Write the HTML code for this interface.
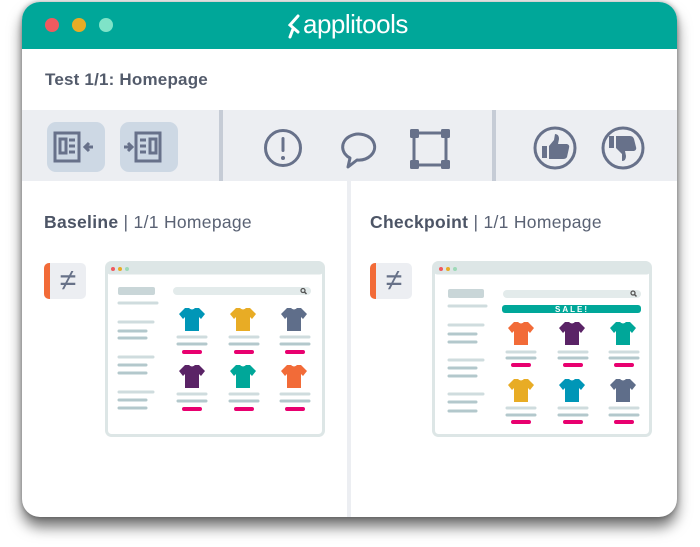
<!DOCTYPE html>
<html><head><meta charset="utf-8"><style>
*{margin:0;padding:0;box-sizing:border-box}
body{width:700px;height:547px;background:#fff;position:relative;overflow:hidden;font-family:"Liberation Sans",sans-serif}
.win{position:absolute;left:22px;top:2px;width:655px;height:515px;border-radius:18px;background:#fff;overflow:hidden;box-shadow:0 10px 14px rgba(0,0,0,.55),0 0 6px rgba(0,0,0,.35)}
.hdr{position:absolute;left:0;top:0;width:655px;height:47px;background:#00A799}
.dot{position:absolute;top:16px;width:14px;height:14px;border-radius:50%}
.title{position:absolute;left:23px;top:68px;font-size:17px;font-weight:bold;color:#535b6b;letter-spacing:0.2px}
.tb{position:absolute;left:0;top:108px;width:655px;height:71px;background:#ECEEF2}
.sep{position:absolute;top:108px;width:4px;height:71px;background:#C6CCD6}
.btn{position:absolute;top:120px;width:58px;height:50px;border-radius:9px;background:#CDD8E4}
.vdiv{position:absolute;left:325px;top:179px;width:4px;height:340px;background:#ECEEF2}
.lbl{position:absolute;top:210px;font-size:17.5px;color:#5a6274;letter-spacing:0.3px}
.lbl b{color:#4d5566}
.ne{position:absolute;top:261px;width:42px;height:36px;background:#ECEEF2;border-radius:5px;overflow:hidden;color:#677188;font-size:30px;line-height:36px;text-align:center;padding-left:6px}
.ne:before{content:"";position:absolute;left:0;top:0;width:6px;height:36px;background:#F26B38}
svg{position:absolute}
</style></head><body>
<div class="win">
 <div class="hdr">
  <div class="dot" style="left:23px;background:#F05A5F"></div>
  <div class="dot" style="left:50px;background:#E8AC25"></div>
  <div class="dot" style="left:77px;background:#7FE3C8"></div>
  <svg style="left:262px;top:11px" width="20" height="26" viewBox="0 0 20 26"><path d="M14 3 L6 12 L14 19 M9 16 L6 24" stroke="#fff" stroke-width="3" fill="none" stroke-linecap="round"/></svg>
  <div style="position:absolute;left:281px;top:7px;font-size:26px;color:#fff;font-weight:normal;letter-spacing:-0.5px">applitools</div>
 </div>
 <div class="title">Test 1/1: Homepage</div>
 <div class="tb"></div>
 <div class="sep" style="left:197px"></div>
 <div class="sep" style="left:470px"></div>
 <div class="btn" style="left:25px"></div>
 <div class="btn" style="left:98px"></div>
 <svg style="left:0;top:108px" width="655" height="71" viewBox="0 0 655 71">
  <g fill="none" stroke="#67718A" stroke-width="3">
   <rect x="33" y="23" width="24" height="28"/><rect x="38" y="29" width="6" height="14"/>
   <path d="M47 30h6M47 36h6M47 42h6M71 37h-8M67 33l-4 4 4 4"/>
   <rect x="114" y="23" width="24" height="28"/><rect x="128" y="29" width="6" height="14"/>
   <path d="M118 30h6M118 36h6M118 42h6M102 37h8M106 33l4 4-4 4"/>
   <circle cx="261" cy="38" r="17.5"/>
   <path d="M328 48 L326 57 L335 50 A16 13 0 1 0 328 48 Z" stroke-linejoin="round"/>
   <rect x="392" y="23" width="32" height="32"/>
   <circle cx="533" cy="38" r="20"/><circle cx="601" cy="38" r="20"/>
  </g>
  <g fill="#67718A">
   <rect x="259.5" y="27" width="3" height="15" rx="1.5"/><circle cx="261" cy="48" r="2"/>
   <rect x="388" y="19" width="9" height="9" rx="1.5"/><rect x="419" y="19" width="9" height="9" rx="1.5"/>
   <rect x="388" y="50" width="9" height="9" rx="1.5"/><rect x="419" y="50" width="9" height="9" rx="1.5"/>
   <rect x="520" y="36" width="5" height="12"/><path d="M527 36 L532 30 L533 24 Q537 24 537 29 L536 34 L545 34 Q548 35 547 38 L545 47 Q544 49 541 49 L527 49Z"/>
   <rect x="587" y="26" width="5" height="12"/><path d="M594 38 L600 44 L600 51 Q604 51 604 46 L603 41 L612 41 Q615 40 614 37 L612 29 Q611 26 608 26 L594 26Z"/>
  </g>
 </svg>
 <div class="vdiv"></div>
 <div class="lbl" style="left:22px"><b>Baseline</b> | 1/1 Homepage</div>
 <div class="lbl" style="left:348px"><b>Checkpoint</b> | 1/1 Homepage</div>
 <div class="ne" style="left:22px">≠</div>
 <div class="ne" style="left:348px">≠</div>
</div>

<svg width="0" height="0" style="position:absolute"><defs>
 <path id="sh" d="M7 0 L11 0 Q14 3 17 0 L21 0 L27 6 L23 11 L21 9 L21 23 L7 23 L7 9 L5 11 L1 6 Z"/>
</defs></svg>

<svg style="left:105px;top:261px" width="220" height="176" viewBox="0 0 220 176">
 <rect x="1.5" y="1.5" width="217" height="173" rx="5" fill="#fff" stroke="#DDE6E6" stroke-width="3"/>
 <rect x="1.5" y="1.5" width="217" height="12" rx="4" fill="#DDE6E6"/>
 <circle cx="8" cy="8" r="2" fill="#F05A5F"/><circle cx="15" cy="8" r="2" fill="#E8AC25"/><circle cx="22" cy="8" r="2" fill="#9ED9B8"/>
 <rect x="13" y="26" width="37" height="8" rx="2" fill="#C9D6D8"/>
 <g stroke-width="3" stroke-linecap="round">
  <path d="M14 42h38M14 61h34M14 96h34M14 131h34" stroke="#CFDCDE"/>
  <path d="M14 70h27M14 77h27M14 104h27M14 112h27M14 139h27M14 147h27" stroke="#B3C8CC"/>
  <path d="M73 76h28M125 76h28M176 76h28M73 133h28M125 133h28M176 133h28" stroke="#CFDCDE"/>
  <path d="M73 83h28M125 83h28M176 83h28M73 140h28M125 140h28M176 140h28" stroke="#B3C8CC"/>
  <path d="M79 91h16M131 91h16M182 91h16M79 148h16M131 148h16M182 148h16" stroke="#E8006F" stroke-width="4"/>
 </g>
 <rect x="68" y="26" width="138" height="8" rx="4" fill="#E3EBEB"/>
 <circle cx="198" cy="29.5" r="2" fill="none" stroke="#555" stroke-width="1.3"/><path d="M199.5 31l2 2" stroke="#555" stroke-width="1.5"/>
 <use href="#sh" x="73" y="47" fill="#0096B7"/><use href="#sh" x="124" y="47" fill="#E8AC25"/><use href="#sh" x="175" y="47" fill="#5F6E8A"/>
 <use href="#sh" x="73" y="104" fill="#5A2366"/><use href="#sh" x="124" y="104" fill="#00A799"/><use href="#sh" x="175" y="104" fill="#F26B38"/>
</svg>

<svg style="left:432px;top:261px" width="220" height="176" viewBox="0 0 220 176">
 <rect x="1.5" y="1.5" width="217" height="173" rx="5" fill="#fff" stroke="#DDE6E6" stroke-width="3"/>
 <rect x="1.5" y="1.5" width="217" height="12" rx="4" fill="#DDE6E6"/>
 <circle cx="9" cy="8" r="2" fill="#F05A5F"/><circle cx="16" cy="8" r="2" fill="#E8AC25"/><circle cx="23" cy="8" r="2" fill="#9ED9B8"/>
 <rect x="16" y="28" width="36" height="9" rx="2" fill="#C9D6D8"/>
 <g stroke-width="3" stroke-linecap="round">
  <path d="M17 45h37M17 64h34M17 99h34M17 133h34" stroke="#CFDCDE"/>
  <path d="M17 73h27M17 81h27M17 107h27M17 115h27M17 141h27M17 150h27" stroke="#B3C8CC"/>
  <path d="M75 91h28M127 91h28M178 91h28M75 147h28M127 147h28M178 147h28" stroke="#CFDCDE"/>
  <path d="M75 97h28M127 97h28M178 97h28M75 154h28M127 154h28M178 154h28" stroke="#B3C8CC"/>
  <path d="M81 104h16M133 104h16M184 104h16M81 161h16M133 161h16M184 161h16" stroke="#E8006F" stroke-width="4"/>
 </g>
 <rect x="71" y="29" width="138" height="8" rx="4" fill="#E3EBEB"/>
 <circle cx="201" cy="32" r="2" fill="none" stroke="#555" stroke-width="1.3"/><path d="M202.5 33.5l2 2" stroke="#555" stroke-width="1.5"/>
 <rect x="70" y="44" width="139" height="8" rx="3" fill="#00A799"/>
 <text x="140" y="51" text-anchor="middle" font-family="Liberation Sans" font-weight="bold" font-size="8" letter-spacing="2" fill="#fff">SALE!</text>
 <use href="#sh" x="75" y="61" fill="#F26B38"/><use href="#sh" x="126" y="61" fill="#5A2366"/><use href="#sh" x="177" y="61" fill="#00A799"/>
 <use href="#sh" x="75" y="118" fill="#E8AC25"/><use href="#sh" x="126" y="118" fill="#0096B7"/><use href="#sh" x="177" y="118" fill="#5F6E8A"/>
</svg>
</body></html>
